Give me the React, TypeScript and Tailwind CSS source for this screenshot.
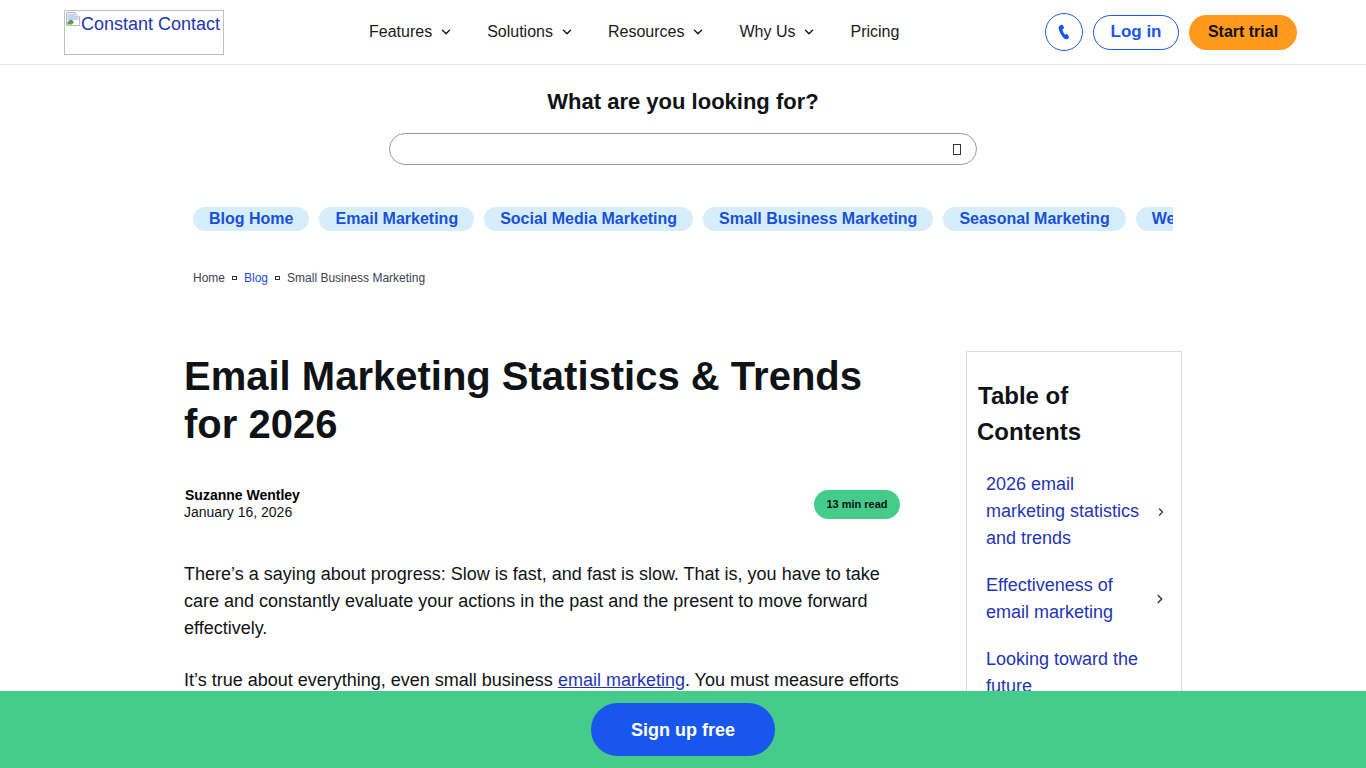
import { ChevronDown, ChevronRight } from 'lucide-react'

const NAV = [
  { label: 'Features', arrow: true },
  { label: 'Solutions', arrow: true },
  { label: 'Resources', arrow: true },
  { label: 'Why Us', arrow: true },
  { label: 'Pricing', arrow: false },
]

const PILLS = ['Blog Home', 'Email Marketing', 'Social Media Marketing', 'Small Business Marketing', 'Seasonal Marketing', 'Website Marketing']

function BrokenImage() {
  return (
    <svg width="16" height="16" viewBox="0 0 16 16" className="shrink-0">
      <path d="M1.5 1.5H10L14.5 6V14.5H1.5Z" fill="#fff" stroke="#b9b9b9" />
      <path d="M10 1.5V6H14.5" fill="#eee" stroke="#b9b9b9" />
      <path d="M2.5 2.5H9.5V6.5H13.5V9L2.5 10Z" fill="#c3d4f5" />
      <path d="M2.5 13.5V11L6 8.5L9 11L7 13.5Z" fill="#5c9e46" />
    </svg>
  )
}

function Tofu({ className }: { className: string }) {
  return <span className={`inline-block border border-[#333] ${className}`} />
}

function PhoneIcon() {
  return (
    <svg width="18" height="18" viewBox="0 0 24 24" fill="#1856ed">
      <path d="M8.6 2.4 6.2 3.6C4.9 4.4 4.7 6 5 7.6c.7 3.8 3.3 9 6.8 12.6 1.2 1.2 2.7 1.9 4.1 1.3l2.2-1.2c.7-.4.9-1.2.5-1.9l-2-3.2c-.4-.6-1.1-.8-1.8-.5l-1.5.8c-1.6-1.7-3-4.600-3.500-6.900l1.500-.8c.6-.4.9-1.100.7-1.800L10.500 3.100c-.3-.8-1.200-1.100-1.900-.7Z" />
    </svg>
  )
}

export default function App() {
  return (
    <div className="h-[768px] overflow-hidden bg-white font-['Liberation_Sans',Arial,sans-serif] text-[#0f1316]">
      <header className="flex h-[65px] items-center border-b border-[#e5e7eb] pl-16 pr-[69px]">
        <a className="flex h-[45px] w-40 items-start overflow-hidden border border-[#c0c0c0] text-[18px] leading-[26px] text-[#1f35b5]">
          <BrokenImage />
          <span className="whitespace-nowrap">Constant Contact</span>
        </a>
        <nav className="ml-[145px] flex items-center gap-[34px] text-base text-[#1a1a1a]">
          {NAV.map((item) => (
            <span key={item.label} className="flex items-center gap-[7px]">
              {item.label}
              {item.arrow && <ChevronDown size={14} strokeWidth={2.5} />}
            </span>
          ))}
        </nav>
        <div className="ml-auto flex items-center gap-[10px]">
          <button className="flex size-[38px] items-center justify-center rounded-full border border-[#1856ed]">
            <PhoneIcon />
          </button>
          <button className="h-[35px] w-[86px] rounded-full border border-[#1856ed] text-[17px] font-bold text-[#1856ed]">Log in</button>
          <button className="h-[35px] w-[108px] rounded-full bg-[#ff9a1e] text-base font-bold text-[#14110b]">Start trial</button>
        </div>
      </header>

      <section className="flex flex-col items-center pt-[24px]">
        <h2 className="text-[22px] font-bold leading-[26px]">What are you looking for?</h2>
        <div className="mt-[18px] flex h-8 w-[588px] items-center justify-end rounded-full border border-[#9a9aa6] pr-[15px]">
          <Tofu className="h-[11px] w-2" />
        </div>
      </section>

      <div className="mx-auto mt-[42px] flex w-[980px] gap-[10px] overflow-hidden">
        {PILLS.map((pill) => (
          <span key={pill} className="h-6 shrink-0 rounded-full bg-[#d6edfc] px-4 text-base font-bold leading-6 text-[#1a50d8]">
            {pill}
          </span>
        ))}
      </div>

      <div className="ml-[193px] mt-[38px] flex items-center text-xs leading-[18px] text-[#3b4252]">
        <span>Home</span>
        <Tofu className="mx-[7px] h-1 w-[5px]" />
        <span className="text-[#1a50d8]">Blog</span>
        <Tofu className="mx-[7px] h-1 w-[5px]" />
        <span>Small Business Marketing</span>
      </div>

      <main className="ml-[184px] mt-[65px] flex">
        <article className="w-[716px]">
          <h1 className="text-[40px] font-bold leading-[48px]">
            Email Marketing Statistics &amp; Trends
            <br />
            for 2026
          </h1>
          <div className="mt-[39px] flex items-center justify-between">
            <div className="text-sm leading-[17px]">
              <div className="pl-px font-bold text-black">Suzanne Wentley</div>
              <div>January 16, 2026</div>
            </div>
            <span className="flex h-[29px] w-[86px] items-center justify-center rounded-full bg-[#46cc8a] text-[11px] font-bold">13 min read</span>
          </div>
          <p className="mt-[40px] text-lg leading-[27px]">
            There’s a saying about progress: Slow is fast, and fast is slow. That is, you have to take care and constantly evaluate your actions in the past and the present to move forward effectively.
          </p>
          <p className="mt-[25px] text-lg leading-[27px]">
            It’s true about everything, even small business <a className="text-[#1f35b5] underline">email marketing</a>. You must measure efforts
          </p>
        </article>

        <aside className="-mt-px ml-[66px] h-[400px] w-[216px] border border-[#dcdcdc] pl-[10px] pr-[14px] pt-[26px]">
          <h3 className="text-2xl font-bold leading-[36px]">
            <span className="pl-px">Table of</span>
            <br />
            Contents
          </h3>
          <ul className="mt-[21px] text-lg leading-[27px] text-[#1f35b5]">
            <li className="flex items-center justify-between pl-[9px]">
              <span className="w-[160px]">2026 email marketing statistics and trends</span>
              <ChevronRight size={12} strokeWidth={2.5} className="text-[#333]" />
            </li>
            <li className="mt-[20px] flex items-center justify-between pl-[9px]">
              <span className="w-[160px]">Effectiveness of email marketing</span>
              <ChevronRight size={14} strokeWidth={2.5} className="text-[#333]" />
            </li>
            <li className="mt-[20px] pl-[9px]">
              <span className="block w-[160px]">Looking toward the future</span>
            </li>
          </ul>
        </aside>
      </main>

      <div className="fixed inset-x-0 bottom-0 flex h-[77px] items-center justify-center bg-[#46cc8a]">
        <button className="h-[53px] w-[184px] rounded-full bg-[#1856ed] text-lg font-bold text-white">Sign up free</button>
      </div>
    </div>
  )
}
